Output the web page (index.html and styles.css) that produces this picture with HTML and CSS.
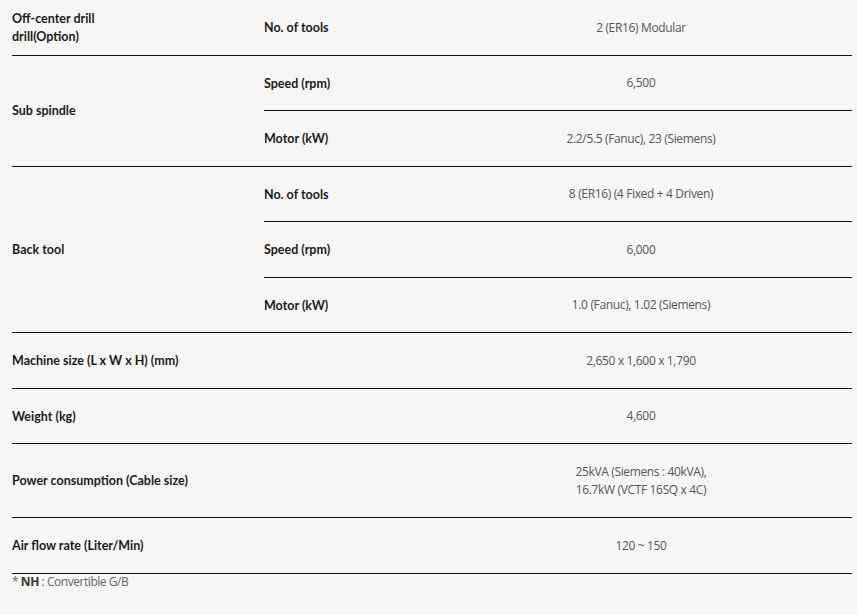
FILE: index.html
```html
<!DOCTYPE html>
<html>
<head>
<meta charset="utf-8">
<link rel="stylesheet" href="styles.css">
</head>
<body>
<div class="spec">
  <div class="group">
    <div class="glabel">Off-center drill<br>drill(Option)</div>
    <div class="subs">
      <div class="sub"><div class="slabel">No. of tools</div><div class="val">2 (ER16) Modular</div></div>
    </div>
  </div>
  <div class="group">
    <div class="glabel">Sub spindle</div>
    <div class="subs">
      <div class="sub"><div class="slabel">Speed (rpm)</div><div class="val">6,500</div></div>
      <div class="sub"><div class="slabel">Motor (kW)</div><div class="val">2.2/5.5 (Fanuc), 23 (Siemens)</div></div>
    </div>
  </div>
  <div class="group">
    <div class="glabel">Back tool</div>
    <div class="subs">
      <div class="sub"><div class="slabel">No. of tools</div><div class="val">8 (ER16) (4 Fixed + 4 Driven)</div></div>
      <div class="sub"><div class="slabel">Speed (rpm)</div><div class="val">6,000</div></div>
      <div class="sub"><div class="slabel">Motor (kW)</div><div class="val">1.0 (Fanuc), 1.02 (Siemens)</div></div>
    </div>
  </div>
  <div class="row"><div class="wlabel">Machine size (L x W x H) (mm)</div><div class="val">2,650 x 1,600 x 1,790</div></div>
  <div class="row"><div class="wlabel">Weight (kg)</div><div class="val">4,600</div></div>
  <div class="row tall"><div class="wlabel">Power consumption (Cable size)</div><div class="val">25kVA (Siemens : 40kVA),<br>16.7kW (VCTF 16SQ x 4C)</div></div>
  <div class="row"><div class="wlabel">Air flow rate (Liter/Min)</div><div class="val">120 ~ 150</div></div>
</div>
<p class="note">* <b>NH</b> : Convertible G/B</p>
</body>
</html>
```
FILE: styles.css
```css
html, body { margin: 0; padding: 0; background: #f6f6f6; }
body { font-family: "Lato", "Open Sans", sans-serif; font-size: 12.5px; color: #222; }
.spec { margin: 0 5px 0 12px; }
.group, .row { display: flex; border-bottom: 1px solid #111; }
.glabel, .wlabel, .slabel { font-weight: bold; color: #1a1a1a; display: flex; align-items: center; line-height: 18.5px; padding-top: 2px; }
.glabel { width: 252px; flex: none; }
.subs { flex: 1; display: flex; flex-direction: column; }
.sub { display: flex; height: 54.5px; border-bottom: 1px solid #111; }
.sub:last-child { border-bottom: none; height: 54.5px; }
.slabel { width: 166px; flex: none; }
.wlabel { width: 418px; flex: none; }
.row { height: 54.5px; }
.row.tall { height: 73px; }
.val { flex: 1; display: flex; align-items: center; justify-content: center; text-align: center; color: #555; font-family: "Open Sans", sans-serif; font-size: 12px; letter-spacing: -0.35px; line-height: 18.5px; padding-top: 1px; }
.note { margin: 0 12px; color: #666; line-height: 15px; font-family: "Open Sans", sans-serif; font-size: 12px; letter-spacing: -0.45px; }
.note b { color: #333; }
```
